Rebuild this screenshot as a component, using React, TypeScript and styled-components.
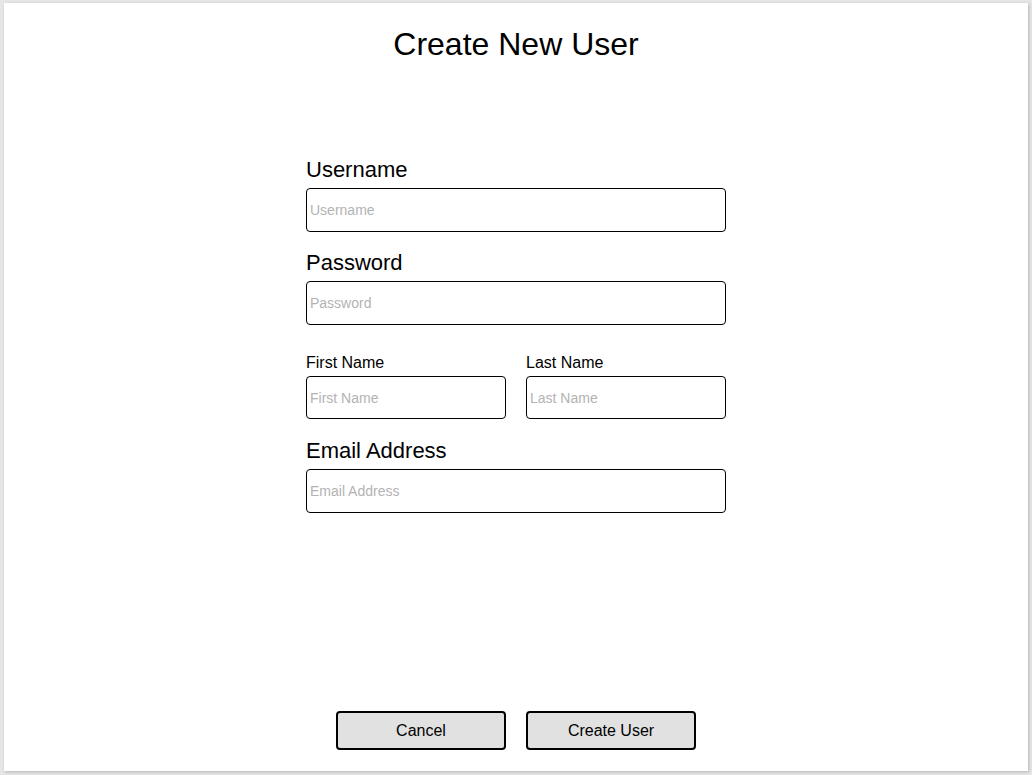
import React from "react";
import styled, { createGlobalStyle } from "styled-components";

const GlobalStyle = createGlobalStyle`
  html, body {
    margin: 0;
    padding: 0;
    background-color: #e6e6e6;
    font-family: "Liberation Sans", Arial, sans-serif;
  }
`;

const Page = styled.div`
  width: 1032px;
  height: 775px;
  box-sizing: border-box;
  padding: 3px 4px 4px 4px;
`;

const Panel = styled.div`
  width: 1024px;
  height: 768px;
  background-color: #ffffff;
  box-shadow: 1px 1px 3px rgba(0, 0, 0, 0.22);
  display: flex;
  flex-direction: column;
  align-items: center;
`;

const Title = styled.h1`
  margin: 23px 0 0 0;
  font-size: 32px;
  line-height: 37px;
  font-weight: normal;
  color: #000;
`;

const Form = styled.form`
  width: 420px;
  margin-top: 94px;
  display: flex;
  flex-direction: column;
`;

const Field = styled.div<{ $top: number }>`
  display: flex;
  flex-direction: column;
  margin-top: ${(p) => p.$top}px;
  flex: 1;
`;

const Label = styled.label<{ $small?: boolean }>`
  font-size: ${(p) => (p.$small ? "16px" : "22px")};
  line-height: ${(p) => (p.$small ? "18px" : "25px")};
  margin-bottom: ${(p) => (p.$small ? "4px" : "6px")};
  color: #000;
`;

const Input = styled.input<{ $short?: boolean }>`
  box-sizing: border-box;
  width: 100%;
  height: ${(p) => (p.$short ? "43px" : "44px")};
  border: 1px solid #000;
  border-radius: 4px;
  padding: 0 3px;
  font-family: "Liberation Sans", Arial, sans-serif;
  font-size: 14px;
  color: #000;
  background: #fff;
  outline: none;
  &::placeholder {
    color: #b3b3b3;
  }
`;

const NameRow = styled.div`
  display: flex;
  gap: 20px;
  margin-top: 29px;
`;

const Actions = styled.div`
  margin-top: auto;
  margin-bottom: 21px;
  display: flex;
  gap: 20px;
`;

const Button = styled.button`
  box-sizing: border-box;
  width: 170px;
  height: 39px;
  border: 2px solid #000;
  border-radius: 4px;
  background-color: #e1e1e1;
  font-family: "Liberation Sans", Arial, sans-serif;
  font-size: 16px;
  color: #000;
  cursor: pointer;
  &:active {
    filter: brightness(90%);
  }
`;

const App: React.FC = () => {
  return (
    <>
      <GlobalStyle />
      <Page>
        <Panel>
          <Title>Create New User</Title>
          <Form onSubmit={(e) => e.preventDefault()}>
            <Field $top={0}>
              <Label>Username</Label>
              <Input type="text" placeholder="Username" />
            </Field>
            <Field $top={18}>
              <Label>Password</Label>
              <Input type="password" placeholder="Password" />
            </Field>
            <NameRow>
              <Field $top={0}>
                <Label $small>First Name</Label>
                <Input $short type="text" placeholder="First Name" />
              </Field>
              <Field $top={0}>
                <Label $small>Last Name</Label>
                <Input $short type="text" placeholder="Last Name" />
              </Field>
            </NameRow>
            <Field $top={19}>
              <Label>Email Address</Label>
              <Input type="email" placeholder="Email Address" />
            </Field>
          </Form>
          <Actions>
            <Button type="button">Cancel</Button>
            <Button type="button">Create User</Button>
          </Actions>
        </Panel>
      </Page>
    </>
  );
};

export default App;
